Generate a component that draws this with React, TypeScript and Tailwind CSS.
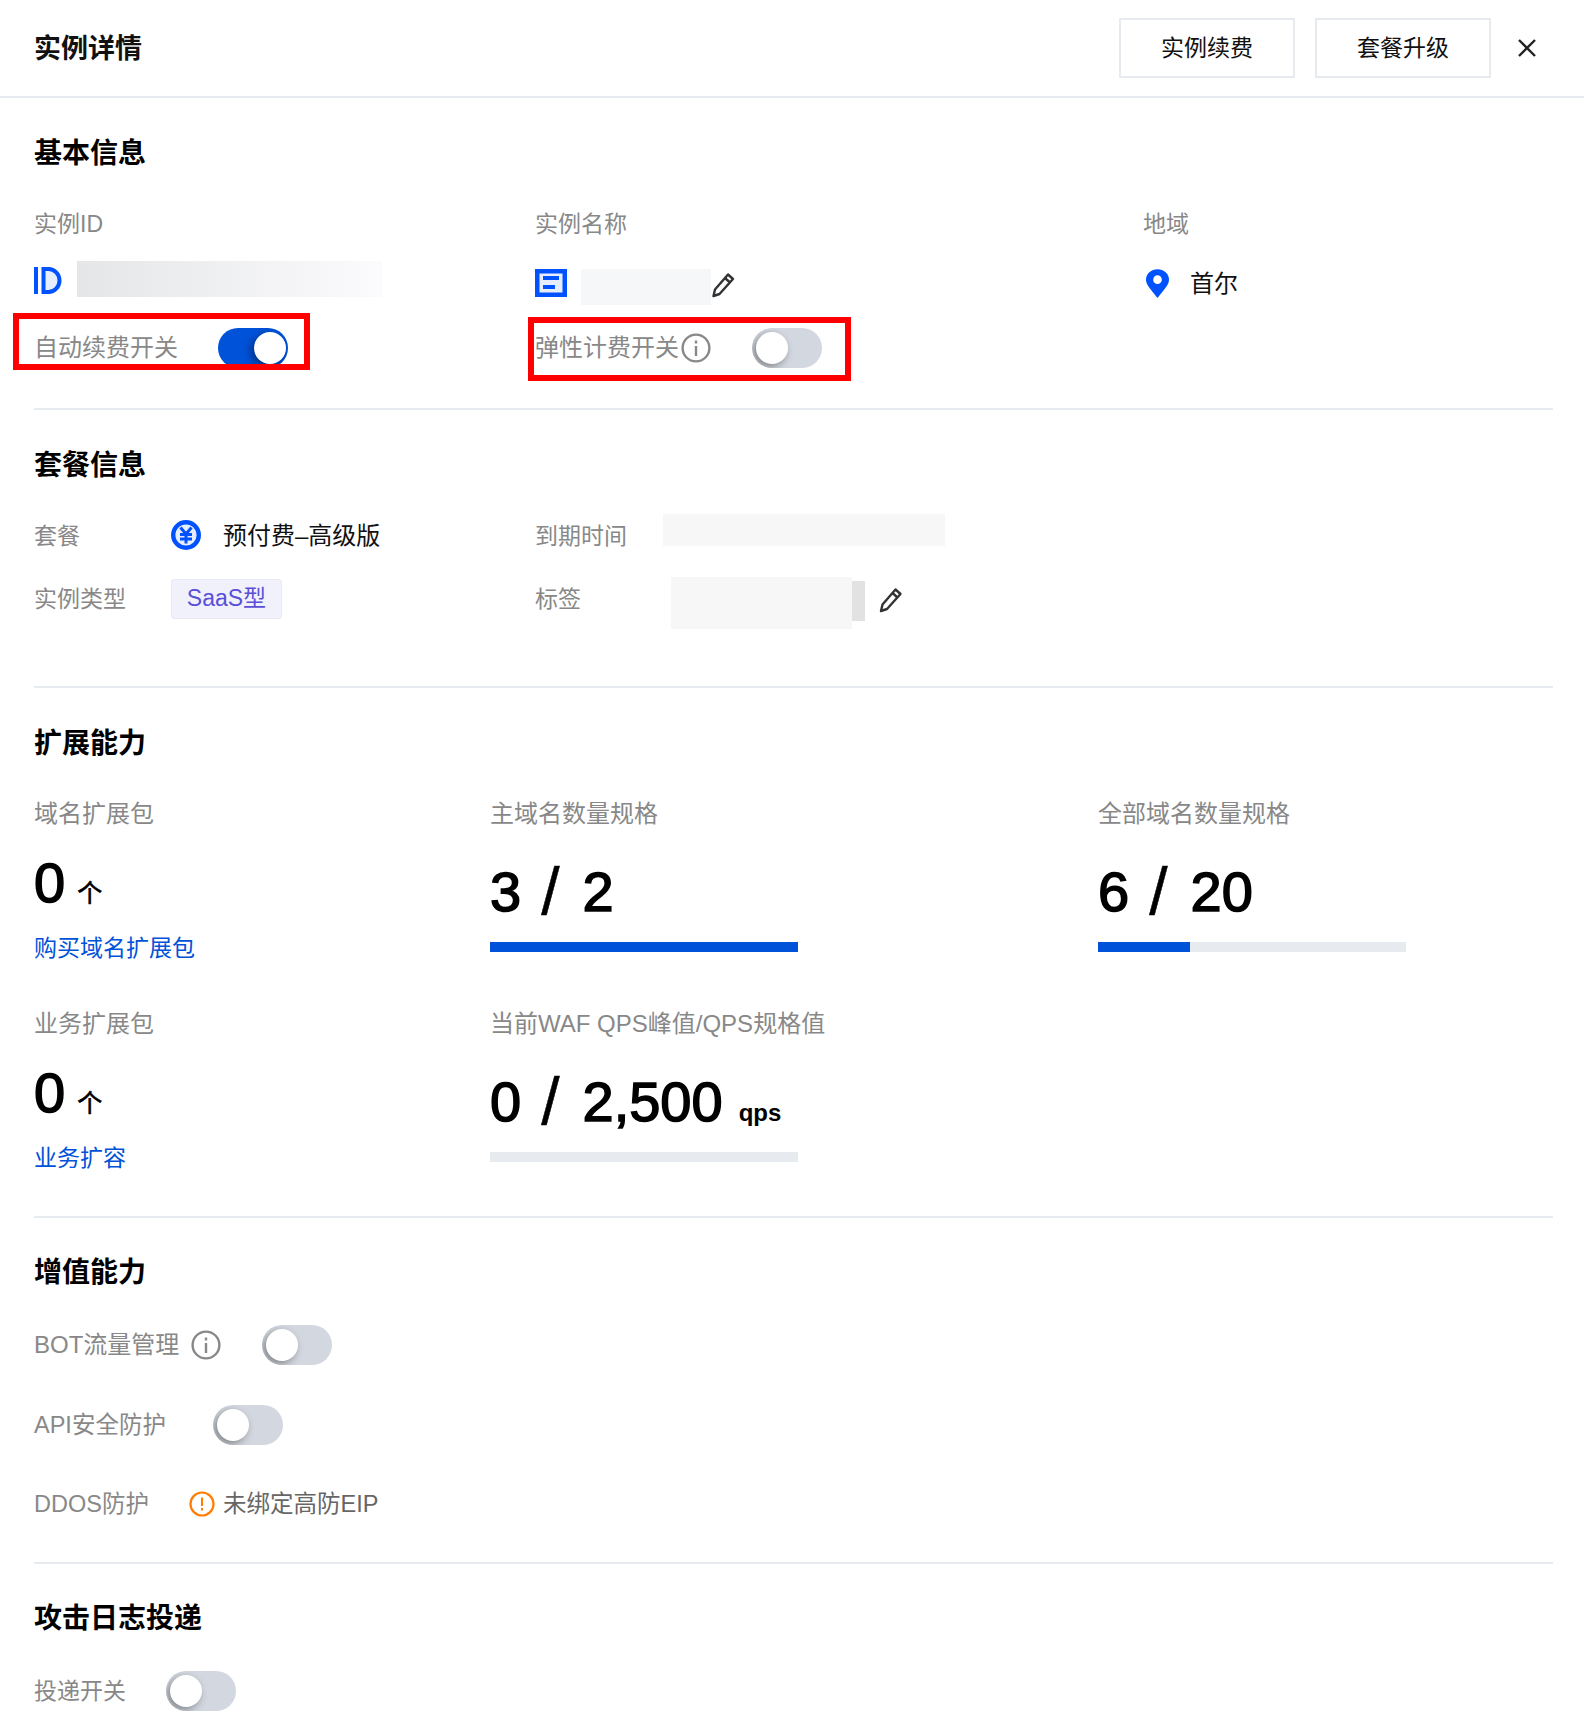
const font = '[font-family:"Liberation_Sans","Noto_Sans_CJK_SC",sans-serif]';

function Pencil({ className }: { className: string }) {
  return (
    <svg viewBox="0 0 24 26" fill="none" stroke="#333" strokeWidth="2.400" className={className}>
      <path d="M17 2.500l5 4.500L8.500 22 2.500 24l1.500-6.500z" strokeLinejoin="round" />
      <path d="M14 6l5 4.500" />
    </svg>
  );
}

function Info({ className }: { className: string }) {
  return (
    <svg viewBox="0 0 30 30" fill="none" className={className}>
      <circle cx="15" cy="15" r="13.400" stroke="#888" strokeWidth="2.400" />
      <rect x="13.800" y="13" width="2.400" height="10" fill="#888" />
      <rect x="13.800" y="7.500" width="2.400" height="3" fill="#888" />
    </svg>
  );
}

function Toggle({ on = false }: { on?: boolean }) {
  return (
    <div className={`relative shrink-0 w-[70px] h-10 rounded-full overflow-hidden ${on ? "bg-[#0052d9]" : "bg-[#d3d8e0]"}`}>
      <div className={`absolute top-1 w-8 h-8 rounded-full bg-white shadow-[-3px_3px_8px_rgba(0,0,0,0.4)] ${on ? "right-0.5" : "left-1"}`} />
    </div>
  );
}

function Heading({ children }: { children: React.ReactNode }) {
  return <h2 className="h-10 leading-[44px] text-[28px] font-bold text-black">{children}</h2>;
}

function Label({ children, big = false }: { children: React.ReactNode; big?: boolean }) {
  return <div className={`h-8 leading-[34px] text-[#888] ${big ? "text-[24px]" : "text-[23px]"}`}>{children}</div>;
}

function Divider() {
  return <div className="h-0.5 bg-[#e7eaef]" />;
}

function Count({ label, link }: { label: string; link: string }) {
  return (
    <div>
      <Label big>{label}</Label>
      <div className="mt-[26px] h-14 leading-14 text-[56px] [-webkit-text-stroke:1.500px_#000] text-black">
        0<span className="ml-3 text-[25px] [-webkit-text-stroke:0.600px_#000]">个</span>
      </div>
      <a href="#" className="mt-[21px] block h-8 leading-8 text-[23px] text-[#0052d9]">{link}</a>
    </div>
  );
}

function Quota({ label, left, right, unit, pct }: { label: string; left: string; right: string; unit?: string; pct: number }) {
  return (
    <div>
      <Label big>{label}</Label>
      <div className="mt-[35px] h-14 leading-14 text-[56px] [-webkit-text-stroke:1.500px_#000] text-black whitespace-nowrap">
        {left}
        <span className="ml-5 mr-[23px] text-[66px] leading-[0] align-[-3px] [-webkit-text-stroke:0.500px_#000]">/</span>
        {right}
        {unit && <span className="ml-4 text-[24px] font-bold [-webkit-text-stroke:0]">{unit}</span>}
      </div>
      <div className="mt-[22px] w-[308px] h-2.5 bg-[#e7eaef]">
        <div className="h-full bg-[#0052d9]" style={{ width: `${pct}%` }} />
      </div>
    </div>
  );
}

export default function App() {
  return (
    <div className={`relative w-[1584px] h-[1734px] bg-white overflow-hidden ${font}`}>
      {/* Header */}
      <header className="h-[98px] border-b-2 border-[#e7eaef] flex items-center pl-[34px] pr-[47px]">
        <h1 className="pt-0.5 text-[27px] font-bold text-[#111]">实例详情</h1>
        <div className="ml-auto flex items-center gap-5 text-[23px] text-[#111]">
          <button className="w-[176px] h-[60px] border-2 border-[#e7eaef]">实例续费</button>
          <button className="w-[176px] h-[60px] border-2 border-[#e7eaef]">套餐升级</button>
        </div>
        <svg viewBox="0 0 20 20" className="ml-[26px] w-5 h-5" stroke="#222" strokeWidth="2.400">
          <path d="M2 2l16 16M18 2L2 18" />
        </svg>
      </header>

      <main className="pl-[34px] pr-[31px]">
        {/* 基本信息 */}
        <section className="pt-[34px]">
          <Heading>基本信息</Heading>
          <div className="mt-[35px] grid grid-cols-[501px_608px_1fr]">
            <Label>实例ID</Label>
            <Label>实例名称</Label>
            <Label>地域</Label>
          </div>
          <div className="mt-6 h-10 grid grid-cols-[501px_608px_1fr] grid-rows-[40px] items-start">
            <div className="-mt-0.5 flex items-start gap-[15px] h-9">
              <svg viewBox="0 0 28 27" className="mt-1.5 w-7 h-[27px]">
                <rect x="0" y="0" width="4" height="27" fill="#0052ff" />
                <path d="M9.500 2h5c6 0 11 5 11 11.500S20.500 25 14.500 25h-5z" fill="#e5edff" stroke="#0052ff" strokeWidth="4" />
              </svg>
              <div className="w-[305px] h-9 bg-linear-to-r from-[#e5e6e8] to-[#fbfbfd]" />
            </div>
            <div className="mt-1.5 flex items-start">
              <svg viewBox="0 0 32 28" className="w-8 h-7">
                <rect x="2.250" y="2.250" width="27.500" height="23.500" fill="#e5edff" stroke="#0052ff" strokeWidth="4.500" />
                <rect x="8" y="7" width="16" height="4" fill="#0052ff" />
                <rect x="8" y="16" width="12" height="4" fill="#0052ff" />
              </svg>
              <div className="ml-3.5 w-[130px] h-9 bg-[#f6f7f8]" />
              <Pencil className="w-6 h-[26px] mt-[3px]" />
            </div>
            <div className="mt-1.5 flex items-start text-[24px] leading-[29px] text-[#111]">
              <svg viewBox="0 0 24 30" className="ml-[3px] w-[23px] h-[29px]">
                <path fillRule="evenodd" clipRule="evenodd" d="M12 30C5 21 0 16.500 0 11a12 11 0 0 1 24 0c0 5.500-5 10-12 19zm0-14.500a4.500 4.500 0 1 0 0-9 4.500 4.500 0 0 0 0 9z" fill="#0052ff" />
              </svg>
              <span className="ml-[21px]">首尔</span>
            </div>
          </div>
          <div className="mt-[25px] h-10 grid grid-cols-[501px_608px_1fr] items-center text-[24px] text-[#888]">
            <div className="flex items-center">
              <span className="w-[184px]">自动续费开关</span>
              <Toggle on />
            </div>
            <div className="flex items-center">
              <span>弹性计费开关</span>
              <Info className="ml-0.5 w-[30px] h-[30px]" />
              <div className="ml-[41px]"><Toggle /></div>
            </div>
          </div>
          <div className="mt-10"><Divider /></div>
        </section>

        {/* 套餐信息 */}
        <section className="pt-[34px]">
          <Heading>套餐信息</Heading>
          <div className="mt-[31px] h-10 grid grid-cols-[501px_1fr] items-center text-[23px] text-[#888]">
            <div className="flex items-center">
              <span className="pt-0.5 w-[137px]">套餐</span>
              <svg viewBox="0 0 30 30" className="w-[30px] h-[30px]" fill="#e5edff" stroke="#0052ff">
                <circle cx="15" cy="15" r="12.800" strokeWidth="4.400" />
                <path d="M9.500 7.500L15 14l5.500-6.500M15 14v9.500M9 14.500h12M9 19h12" fill="none" strokeWidth="3" />
              </svg>
              <span className="pt-0.5 ml-[22px] text-[24px] text-[#111]">预付费–高级版</span>
            </div>
            <div className="flex items-center">
              <span className="pt-0.5 w-[128px]">到期时间</span>
              <div className="w-[282px] h-8 -mt-[10px] bg-[#f7f7f8]" />
            </div>
          </div>
          <div className="mt-[22px] h-10 grid grid-cols-[501px_1fr] items-center text-[23px] text-[#888]">
            <div className="flex items-center">
              <span className="w-[137px]">实例类型</span>
              <span className="w-[111px] h-10 leading-9 text-center rounded-[3px] border border-[#e9e9f7] bg-[#f1f1fc] text-[#5a4fd8]">SaaS型</span>
            </div>
            <div className="flex items-center">
              <span className="w-[136px]">标签</span>
              <div className="w-[181px] h-[52px] -mt-0.5 -mb-2.5 bg-[#f7f7f7]" />
              <div className="w-[13px] h-10 mt-1 bg-[#e2e2e2]" />
              <Pencil className="ml-[13px] w-[25px] h-[26px] mt-0.5" />
            </div>
          </div>
          <div className="mt-[69px]"><Divider /></div>
        </section>

        {/* 扩展能力 */}
        <section className="pt-[34px]">
          <Heading>扩展能力</Heading>
          <div className="mt-[35px] grid grid-cols-[456px_608px_1fr] grid-rows-[210px_209px]">
            <Count label="域名扩展包" link="购买域名扩展包" />
            <Quota label="主域名数量规格" left="3" right="2" pct={100} />
            <Quota label="全部域名数量规格" left="6" right="20" pct={30} />
            <Count label="业务扩展包" link="业务扩容" />
            <Quota label="当前WAF QPS峰值/QPS规格值" left="0" right="2,500" unit="qps" pct={0} />
          </div>
          <Divider />
        </section>

        {/* 增值能力 */}
        <section className="pt-[33px]">
          <Heading>增值能力</Heading>
          <div className="mt-[34px] flex items-center h-10 text-[24px] text-[#888]">
            <span>BOT流量管理</span>
            <Info className="ml-3 w-[30px] h-[30px]" />
            <div className="ml-[41px]"><Toggle /></div>
          </div>
          <div className="mt-10 flex items-center h-10 text-[23.500px] text-[#888]">
            <span className="pt-0.5 w-[179px]">API安全防护</span>
            <Toggle />
          </div>
          <div className="mt-[39px] flex items-center h-10 text-[23.500px] text-[#888]">
            <span className="pt-0.5 w-[155px]">DDOS防护</span>
            <svg viewBox="0 0 26 26" className="w-[26px] h-[26px]" fill="none">
              <circle cx="13" cy="13" r="11.500" stroke="#ff7d00" strokeWidth="2.200" />
              <rect x="12" y="6.500" width="2" height="8.500" fill="#ff7d00" />
              <rect x="12" y="17" width="2" height="2.500" fill="#ff7d00" />
            </svg>
            <span className="pt-0.5 ml-2 text-[#666]">未绑定高防EIP</span>
          </div>
          <div className="mt-[38px]"><Divider /></div>
        </section>

        {/* 攻击日志投递 */}
        <section className="pt-[33px]">
          <Heading>攻击日志投递</Heading>
          <div className="mt-[34px] flex items-center h-10 text-[23px] text-[#888]">
            <span className="w-[132px]">投递开关</span>
            <Toggle />
          </div>
        </section>
      </main>

      {/* red annotation boxes */}
      <div className="absolute left-[13px] top-[313px] w-[297px] h-[57px] border-[6px] border-[#ff0000]" />
      <div className="absolute left-[528px] top-[317px] w-[323px] h-[64px] border-[6px] border-[#ff0000]" />
    </div>
  );
}
